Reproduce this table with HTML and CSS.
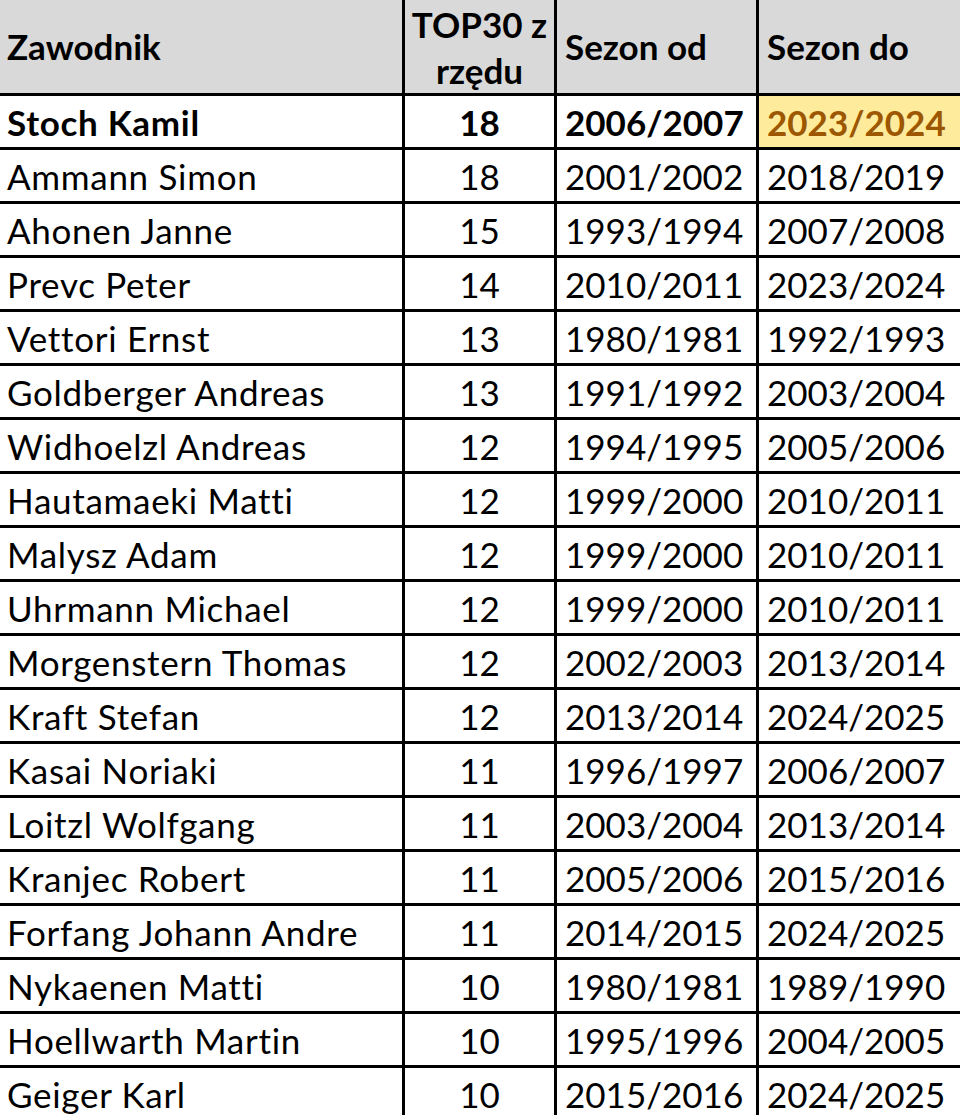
FILE: index.html
```html
<!DOCTYPE html>
<html lang="pl">
<head>
<meta charset="utf-8">
<title>TOP30 z rzędu</title>
<link rel="stylesheet" href="styles.css">
</head>
<body>
<table class="sheet">
  <colgroup>
    <col class="c-name">
    <col class="c-num">
    <col class="c-from">
    <col class="c-to">
  </colgroup>
  <thead>
    <tr class="head">
      <th class="name">Zawodnik</th>
      <th class="num"><span class="hl">TOP30 z</span><span class="hl">rzędu</span></th>
      <th class="season">Sezon od</th>
      <th class="season">Sezon do</th>
    </tr>
  </thead>
  <tbody>
    <tr class="lead"><td class="name">Stoch Kamil</td><td class="num">18</td><td class="season">2006/2007</td><td class="season neutral">2023/2024</td></tr>
    <tr><td class="name">Ammann Simon</td><td class="num">18</td><td class="season">2001/2002</td><td class="season">2018/2019</td></tr>
    <tr><td class="name">Ahonen Janne</td><td class="num">15</td><td class="season">1993/1994</td><td class="season">2007/2008</td></tr>
    <tr><td class="name">Prevc Peter</td><td class="num">14</td><td class="season">2010/2011</td><td class="season">2023/2024</td></tr>
    <tr><td class="name">Vettori Ernst</td><td class="num">13</td><td class="season">1980/1981</td><td class="season">1992/1993</td></tr>
    <tr><td class="name">Goldberger Andreas</td><td class="num">13</td><td class="season">1991/1992</td><td class="season">2003/2004</td></tr>
    <tr><td class="name">Widhoelzl Andreas</td><td class="num">12</td><td class="season">1994/1995</td><td class="season">2005/2006</td></tr>
    <tr><td class="name">Hautamaeki Matti</td><td class="num">12</td><td class="season">1999/2000</td><td class="season">2010/2011</td></tr>
    <tr><td class="name">Malysz Adam</td><td class="num">12</td><td class="season">1999/2000</td><td class="season">2010/2011</td></tr>
    <tr><td class="name">Uhrmann Michael</td><td class="num">12</td><td class="season">1999/2000</td><td class="season">2010/2011</td></tr>
    <tr><td class="name">Morgenstern Thomas</td><td class="num">12</td><td class="season">2002/2003</td><td class="season">2013/2014</td></tr>
    <tr><td class="name">Kraft Stefan</td><td class="num">12</td><td class="season">2013/2014</td><td class="season">2024/2025</td></tr>
    <tr><td class="name">Kasai Noriaki</td><td class="num">11</td><td class="season">1996/1997</td><td class="season">2006/2007</td></tr>
    <tr><td class="name">Loitzl Wolfgang</td><td class="num">11</td><td class="season">2003/2004</td><td class="season">2013/2014</td></tr>
    <tr><td class="name">Kranjec Robert</td><td class="num">11</td><td class="season">2005/2006</td><td class="season">2015/2016</td></tr>
    <tr><td class="name">Forfang Johann Andre</td><td class="num">11</td><td class="season">2014/2015</td><td class="season">2024/2025</td></tr>
    <tr><td class="name">Nykaenen Matti</td><td class="num">10</td><td class="season">1980/1981</td><td class="season">1989/1990</td></tr>
    <tr><td class="name">Hoellwarth Martin</td><td class="num">10</td><td class="season">1995/1996</td><td class="season">2004/2005</td></tr>
    <tr><td class="name">Geiger Karl</td><td class="num">10</td><td class="season">2015/2016</td><td class="season">2024/2025</td></tr>
  </tbody>
</table>
</body>
</html>
```
FILE: styles.css
```css
html, body {
  margin: 0;
  padding: 0;
  background: #ffffff;
  overflow: hidden;
}

.sheet {
  border-collapse: separate;
  border-spacing: 0;
  table-layout: fixed;
  width: 1000px;
  font-family: Lato, "Liberation Sans", sans-serif;
  font-size: 35px;
  font-variant-ligatures: none;
  color: #000000;
}

.c-name { width: 405px; }
.c-num { width: 152px; }
.c-from { width: 202px; }
.c-to { width: 241px; }

.sheet th,
.sheet td {
  box-sizing: border-box;
  border-right: 3px solid #000000;
  border-bottom: 3px solid #000000;
  padding: 0 0 0 7px;
  white-space: nowrap;
  overflow: hidden;
  vertical-align: middle;
  line-height: 1;
}

.sheet td.name {
  letter-spacing: 0.7px;
}

.sheet td.season,
.sheet th.season {
  padding-left: 8px;
}

.sheet td.num,
.sheet th.num {
  text-align: center;
  padding-left: 0;
}

.head th {
  height: 96px;
  background: #d9d9d9;
  font-weight: 700;
  text-align: left;
}

.head th.num {
  text-align: center;
  padding-top: 0;
}

.hl {
  display: block;
  height: 46px;
  line-height: 46px;
}

.sheet tbody tr td {
  height: 54px;
  padding-top: 2px;
}

.lead td {
  font-weight: 700;
}

.sheet td.neutral {
  background: #ffeb9c;
  color: #9c5700;
}
```
